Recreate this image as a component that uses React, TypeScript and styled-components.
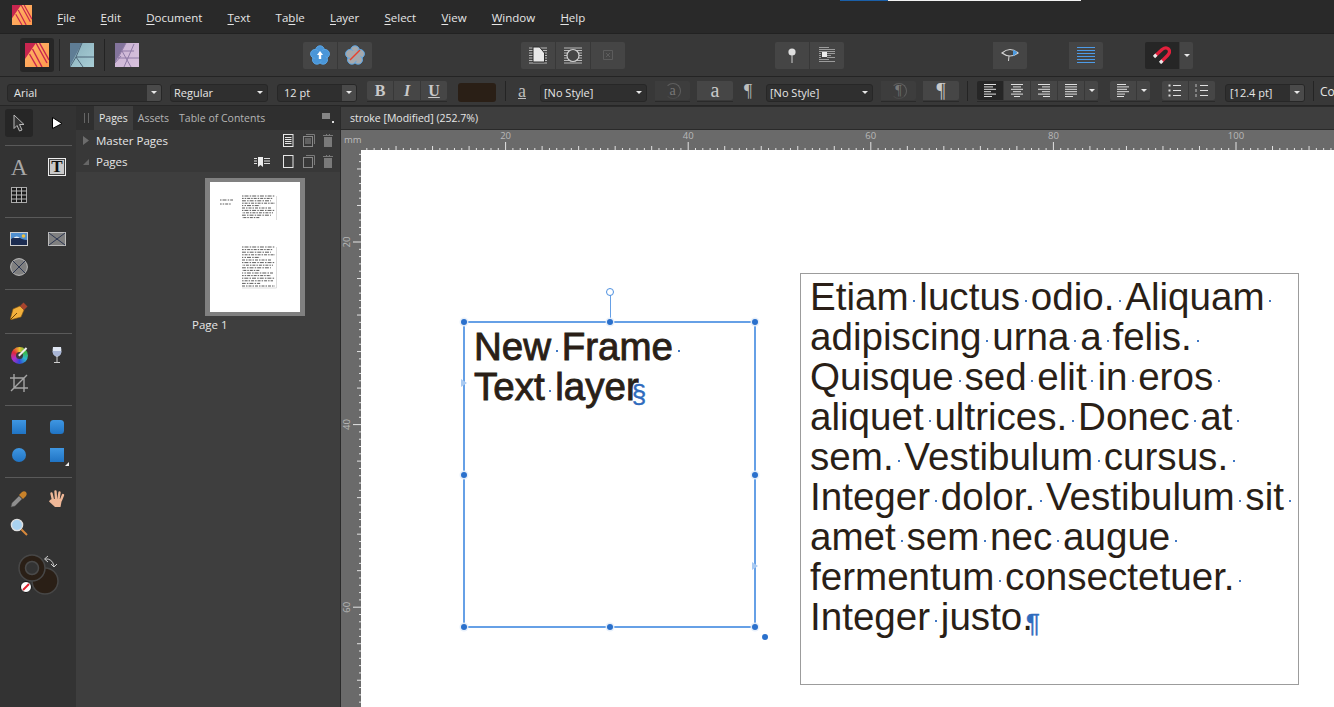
import React from 'react';
import styled, { createGlobalStyle } from 'styled-components';

const UI_FONT = '"Open Sans", "Noto Sans", sans-serif';

const GlobalStyle = createGlobalStyle`
  html, body {
    margin: 0;
    height: 100%;
    overflow: hidden;
    background: #3c3c3c;
  }
  * {
    box-sizing: border-box;
  }
  svg {
    display: block;
  }
`;

const Shell = styled.div`
  position: relative;
  display: flex;
  flex-direction: column;
  width: 1334px;
  height: 707px;
  overflow: hidden;
  font-family: ${UI_FONT};
  font-size: 11.5px;
  color: #e6e6e6;
`;

const TitleProgress = styled.div`
  position: absolute;
  top: 0;
  left: 840px;
  width: 241px;
  height: 1px;
  background: linear-gradient(to right, #1a5fa8 48px, #f2f2f2 48px);
`;

const MenuBar = styled.div`
  display: flex;
  align-items: center;
  gap: 25.2px;
  flex: 0 0 33px;
  padding: 1px 0 0 12px;
  background: #292929;
`;

const MenuLogo = styled.div`
  margin: -5px 0 0 0;
`;

const MenuItem = styled.span`
  u {
    text-underline-offset: 2px;
  }
`;

const Toolbar = styled.div`
  display: flex;
  align-items: center;
  flex: 0 0 44px;
  padding-left: 20px;
  background: #383838;
  border-top: 1px solid #222;
  border-bottom: 1px solid #242424;
`;

const PersonaButton = styled.div<{ $active?: boolean }>`
  display: flex;
  align-items: center;
  justify-content: center;
  width: 34px;
  height: 34px;
  border-radius: 3px;
  background: ${(p) => (p.$active ? '#262626' : 'transparent')};
`;

const PersonaDivider = styled.div`
  width: 1px;
  height: 32px;
  margin: 0 5px;
  background: #232323;
`;

const ButtonGroup = styled.div<{ $ml: number }>`
  display: flex;
  gap: 1px;
  flex-shrink: 0;
  margin-left: ${(p) => p.$ml}px;
`;

const BarButton = styled.div<{ $w?: number; $dark?: boolean }>`
  display: flex;
  align-items: center;
  justify-content: center;
  width: ${(p) => p.$w ?? 34}px;
  height: 27px;
  background: ${(p) => (p.$dark ? '#262626' : '#454545')};
  &:first-child {
    border-radius: 2px 0 0 2px;
  }
  &:last-child {
    border-radius: 0 2px 2px 0;
  }
`;

const ContextBar = styled.div`
  display: flex;
  align-items: center;
  flex: 0 0 29px;
  padding-left: 7px;
  background: #383838;
  border-bottom: 1px solid #262626;
  white-space: nowrap;
`;

const SelectBox = styled.div<{ $ml?: number; $w: number; $pad?: number }>`
  display: flex;
  align-items: center;
  flex-shrink: 0;
  width: ${(p) => p.$w}px;
  height: 18px;
  margin-top: 3px;
  margin-left: ${(p) => p.$ml ?? 0}px;
  padding-left: ${(p) => p.$pad ?? 6}px;
  background: #2f2f2f;
  border: 1px solid #272727;
  border-radius: 3px;
  font-size: 11px;
`;

const SelectLabel = styled.span`
  flex: 1;
`;

const SelectArrow = styled.div<{ $split?: boolean }>`
  display: flex;
  align-items: center;
  justify-content: center;
  align-self: stretch;
  width: 14px;
  background: ${(p) => (p.$split ? '#4a4a4a' : 'transparent')};
  border-radius: 0 2px 2px 0;
`;

const Caret = styled.span`
  width: 0;
  height: 0;
  border-left: 3.5px solid transparent;
  border-right: 3.5px solid transparent;
  border-top: 3.5px solid #e8e8e8;
`;

const SmallGroup = styled.div<{ $ml: number }>`
  display: flex;
  gap: 1px;
  flex-shrink: 0;
  margin-top: 1px;
  margin-left: ${(p) => p.$ml}px;
  padding-bottom: 1px;
  border-bottom: 1px solid #2a2a2a;
`;

const SmallButton = styled.div<{ $w: number; $dark?: boolean; $faded?: boolean; $large?: boolean }>`
  display: flex;
  align-items: center;
  justify-content: center;
  width: ${(p) => p.$w}px;
  height: 19px;
  background: ${(p) => (p.$dark ? '#262626' : p.$faded ? '#3d3d3d' : '#464646')};
  font-family: "Liberation Serif", serif;
  font-size: ${(p) => (p.$large ? 20 : 16)}px;
  color: ${(p) => (p.$faded ? '#777' : '#c9c9c9')};
  &:first-child {
    border-radius: 2px 0 0 2px;
  }
  &:last-child {
    border-radius: 0 2px 2px 0;
  }
`;

const Circled = styled.span`
  display: flex;
  align-items: center;
  justify-content: center;
  width: 16px;
  height: 16px;
  border: 1px solid #5f5f5f;
  border-left-color: transparent;
  border-bottom-color: #4a4a4a;
  border-radius: 50%;
  font-size: 14px;
  line-height: 1;
`;

const ColorSwatch = styled.div`
  flex-shrink: 0;
  width: 38px;
  height: 19px;
  margin-top: 2px;
  margin-left: 11px;
  background: #2a1f16;
  border-radius: 3px;
`;

const BarDivider = styled.div<{ $ml: number }>`
  flex-shrink: 0;
  width: 1px;
  height: 20px;
  margin-left: ${(p) => p.$ml}px;
  background: #242424;
`;

const StyleGlyph = styled.div<{ $ml: number }>`
  flex-shrink: 0;
  width: 16px;
  margin-left: ${(p) => p.$ml}px;
  font-family: "Liberation Serif", serif;
  font-size: 18px;
  line-height: 19px;
  text-align: center;
  color: #bdbdbd;
`;

const Clipped = styled.span`
  flex-shrink: 0;
  margin-left: 6px;
  font-size: 12px;
`;

const Main = styled.div`
  display: flex;
  flex: 1;
  min-height: 0;
`;

const ToolColumn = styled.div`
  flex: 0 0 76px;
  padding: 3px 4px 0 5px;
  background: #333;
`;

const ToolSection = styled.div`
  display: grid;
  grid-template-columns: 28px 28px;
  grid-auto-rows: 28px;
  column-gap: 10px;
  padding: 7px 0 8px;
  border-top: 1px solid #5a5a5a;
  &:first-child {
    padding-top: 0;
    border-top: 0;
  }
`;

const ToolCell = styled.div<{ $active?: boolean }>`
  display: flex;
  align-items: center;
  justify-content: center;
  border-radius: 3px;
  background: ${(p) => (p.$active ? '#262626' : 'transparent')};
`;

const FontTool = styled.span`
  font-family: "Liberation Serif", serif;
  font-size: 23px;
  line-height: 1;
  color: #a8a8a8;
`;

const FrameTool = styled.span`
  display: flex;
  align-items: center;
  justify-content: center;
  width: 18px;
  height: 18px;
  background: #c9c9c9;
  border: 1px solid #eee;
  outline: 1px solid #444;
  outline-offset: -2px;
  font-family: "Liberation Serif", serif;
  font-weight: 700;
  font-size: 17px;
  color: #111;
`;

const ColorWheel = styled.div`
  position: relative;
  width: 17px;
  height: 17px;
  border-radius: 50%;
  background: conic-gradient(#e8c030, #38b848, #30b8d0, #3048d8, #b030c8, #e02838, #e8c030);
  &::after {
    content: '';
    position: absolute;
    inset: 5px;
    border-radius: 50%;
    background: #3a3a3a;
  }
  &::before {
    content: '';
    position: absolute;
    z-index: 1;
    left: 6px;
    top: 4px;
    width: 11px;
    height: 1.5px;
    background: #eee;
    transform: rotate(-45deg);
  }
`;

const ColorPicker = styled.div`
  margin: 1px 0 0 8px;
`;

const Panel = styled.div`
  display: flex;
  flex-direction: column;
  flex: 0 0 264px;
  background: #3e3e3e;
`;

const PanelTabs = styled.div`
  display: flex;
  align-items: stretch;
  flex: 0 0 24px;
  padding-left: 18px;
  background: #2f2f2f;
  font-size: 10.5px;
`;

const PanelTab = styled.div<{ $active?: boolean }>`
  display: flex;
  align-items: center;
  padding: 0 5px;
  background: ${(p) => (p.$active ? '#3e3e3e' : 'transparent')};
  color: ${(p) => (p.$active ? '#e6e6e6' : '#b5b5b5')};
`;

const PanelMenu = styled.div`
  display: flex;
  align-items: center;
  margin-left: auto;
  padding-right: 6px;
`;

const PageRow = styled.div`
  display: flex;
  align-items: center;
  flex: 0 0 21px;
  padding-right: 7px;
  background: #383838;
`;

const RowArrow = styled.div`
  width: 20px;
  display: flex;
  justify-content: center;
`;

const RowLabel = styled.span`
  flex: 1;
`;

const RowIcons = styled.div`
  display: flex;
  align-items: center;
  gap: 8px;
`;

const SpreadSlot = styled.div`
  margin-right: 5px;
`;

const Thumbnails = styled.div`
  position: relative;
  flex: 1;
  padding: 6px 0 0 129px;
`;

const PageThumb = styled.div`
  width: 100px;
  height: 138px;
  padding: 4px 5px;
  background: #808080;
`;

const PageCaption = styled.div`
  margin: 1px 0 0 -13px;
`;

const Workspace = styled.div`
  display: flex;
  flex-direction: column;
  flex: 1;
  min-width: 0;
  background: #3a3a3a;
  border-left: 1px solid #2a2a2a;
`;

const DocTab = styled.div`
  display: flex;
  align-items: center;
  flex: 0 0 24px;
  padding-left: 9px;
  background: #3e3e3e;
  border-top: 1px solid #2a2a2a;
  border-bottom: 1px solid #2a2a2a;
  font-size: 10.5px;
`;

const RulerGrid = styled.div`
  display: grid;
  grid-template-columns: 20px 1fr;
  grid-template-rows: 20px 1fr;
  flex: 1;
  min-height: 0;
  background: #6a6a6a;
`;

const RulerCorner = styled.div`
  padding: 3px 0 0 3px;
  font-size: 9.5px;
  color: #bcbcbc;
`;

const Canvas = styled.div`
  position: relative;
  overflow: hidden;
  background: #fff;
  font-family: "Liberation Sans", Arial, sans-serif;
  color: #2a1f17;
`;

const TextFrame = styled.div`
  position: absolute;
  left: 439px;
  top: 123px;
  width: 499px;
  height: 412px;
  padding: 3px 0 0 9px;
  border: 1px solid #9c9c9c;
  font-size: 38.6px;
  line-height: 40px;
  white-space: nowrap;
`;

const HeadingFrame = styled.div`
  position: absolute;
  left: 113px;
  top: 177px;
  font-size: 38.5px;
  line-height: 40px;
  white-space: nowrap;
  -webkit-text-stroke: 0.9px #2a1f17;
`;

const Line = styled.div``;

const Blank = styled.span`
  position: relative;
  display: inline-block;
  white-space: pre;
  -webkit-text-stroke: 0;
  &::after {
    content: '';
    position: absolute;
    left: 45%;
    top: 23px;
    width: 2px;
    height: 2px;
    background: #3f78c4;
  }
`;

const Mark = styled.span<{ $size: number; $shift: number; $drop: number }>`
  display: inline-block;
  margin-left: ${(p) => p.$shift}px;
  font-size: ${(p) => p.$size}px;
  line-height: 1;
  color: #2f6bbd;
  vertical-align: ${(p) => -p.$drop}px;
  -webkit-text-stroke: 0.4px #2f6bbd;
`;

const Selection = styled.div`
  position: absolute;
  left: 103px;
  top: 172px;
  width: 291px;
  height: 305px;
  box-shadow: 0 0 0 1px #66a0e6, inset 0 0 0 1px #66a0e6;
`;

const Handle = styled.span<{ $x: number; $y: number }>`
  position: absolute;
  left: ${(p) => p.$x}%;
  top: ${(p) => p.$y}%;
  width: 6px;
  height: 6px;
  margin: -3px 0 0 -3px;
  border-radius: 50%;
  background: #2a70cc;
  box-shadow: 0 0 0 1.5px rgba(230, 238, 250, 0.9);
`;

const RotateStem = styled.span`
  position: absolute;
  left: 50%;
  top: -27px;
  width: 1px;
  height: 27px;
  background: #66a0e6;
`;

const RotateKnob = styled.span`
  position: absolute;
  left: 50%;
  top: -34px;
  width: 8px;
  height: 8px;
  margin-left: -4px;
  border: 1.5px solid #4d90e0;
  border-radius: 50%;
  background: #fff;
`;

const FlowPort = styled.span<{ $x: number; $y: number }>`
  position: absolute;
  left: ${(p) => p.$x}%;
  top: ${(p) => p.$y}%;
  margin: -4px 0 0 -3px;
  width: 0;
  height: 0;
  border-top: 4px solid transparent;
  border-bottom: 4px solid transparent;
  border-left: 6px solid #a9caf2;
`;

const OverflowDot = styled.span`
  position: absolute;
  right: -13px;
  bottom: -13px;
  width: 6px;
  height: 6px;
  border-radius: 50%;
  background: #2a70cc;
`;

const PublisherLogo = ({ size }: { size: number }) => (
  <svg width={size} height={size} viewBox="0 0 24 24">
    <defs>
      <linearGradient id={`pub${size}`} x1="0" y1="0" x2="1" y2="1">
        <stop offset="0" stopColor="#ffb56a" />
        <stop offset="1" stopColor="#ff9a4d" />
      </linearGradient>
    </defs>
    <rect width="24" height="24" fill={`url(#pub${size})`} />
    <path d="M0 0H11L0 16Z" fill="#c8264f" />
    <path d="M11 0L22 20M14.5 0L24 17M7.5 6L17 24M4.5 11L12 24" stroke="#c8264f" strokeWidth="1.4" fill="none" />
  </svg>
);

const DesignerLogo = () => (
  <svg width="24" height="24" viewBox="0 0 24 24">
    <defs>
      <linearGradient id="des" x1="0" y1="0" x2="1" y2="1">
        <stop offset="0" stopColor="#87aebb" />
        <stop offset="1" stopColor="#a9ced6" />
      </linearGradient>
    </defs>
    <rect width="24" height="24" fill="url(#des)" />
    <path d="M0 0H12L0 23Z" fill="#5f7d95" />
    <path d="M12 0L6 14H24M6 14L13 24M6 14L0 24" stroke="#4d6578" strokeWidth="1" fill="none" />
  </svg>
);

const PhotoLogo = () => (
  <svg width="24" height="24" viewBox="0 0 24 24">
    <defs>
      <linearGradient id="pho" x1="0" y1="0" x2="1" y2="1">
        <stop offset="0" stopColor="#c8b2d2" />
        <stop offset="1" stopColor="#d9c2de" />
      </linearGradient>
    </defs>
    <rect width="24" height="24" fill="url(#pho)" />
    <path d="M0 0H11L0 20Z" fill="#83749c" />
    <path d="M11 0L3 15H24M16 24L7 8H19M19 1L9 24M0 20L6 13" stroke="#8f7ba6" strokeWidth="1" fill="none" />
  </svg>
);

const Flower = ({ fill, children }: { fill: string; children: React.ReactNode }) => (
  <svg width="20" height="20" viewBox="0 0 20 20">
    {[0, 72, 144, 216, 288].map((a) => (
      <circle
        key={a}
        cx={10 + 5.3 * Math.sin((a * Math.PI) / 180)}
        cy={10.5 - 5.3 * Math.cos((a * Math.PI) / 180)}
        r="4.4"
        fill={fill}
        stroke="#5aa6e6"
        strokeWidth="1"
      />
    ))}
    <circle cx="10" cy="10.5" r="5.6" fill={fill} />
    {children}
  </svg>
);

const StripedBack = () => (
  <path
    d="M0 2H18M0 4.5H18M0 7H18M0 9.5H18M0 12H18M0 14.5H18M0 17H18"
    stroke="#b9b9b9"
    strokeWidth="1"
  />
);

const PageStripes = () => (
  <svg width="18" height="19" viewBox="0 0 18 19">
    <StripedBack />
    <path d="M4 1H10.5L15.5 7V16H4Z" fill="#e8e8e8" stroke="#2d2d2d" />
  </svg>
);

const CircleStripes = () => (
  <svg width="18" height="19" viewBox="0 0 18 19">
    <StripedBack />
    <circle cx="9" cy="9.5" r="6" fill="#454545" stroke="#cfcfcf" strokeWidth="1.2" />
  </svg>
);

const CrossBox = () => (
  <svg width="10" height="10" viewBox="0 0 10 10">
    <path d="M.5.5H9.5V9.5H.5ZM3 3L7 7M7 3L3 7" stroke="#5c5c5c" fill="none" />
  </svg>
);

const Pin = () => (
  <svg width="10" height="15" viewBox="0 0 10 15">
    <circle cx="5" cy="4" r="3.6" fill="#dedede" />
    <path d="M5 7V15" stroke="#cfcfcf" />
  </svg>
);

const WrapLines = () => (
  <svg width="17" height="16" viewBox="0 0 17 16">
    <path
      d="M0 .5H10M0 2.5H16M0 4.5H16M0 6.5H2M8 6.5H16M0 8.5H2M8 8.5H12M0 10.5H2M8 10.5H16M0 12.5H10M0 14.5H16"
      stroke="#9b9b9b"
    />
    <rect x="3" y="5" width="5" height="5" fill="#eee" />
  </svg>
);

const Preview = () => (
  <svg width="18" height="14" viewBox="0 0 18 14">
    <path d="M1 5Q9 -2 17 5Q9 11 1 5Z" fill="none" stroke="#d5d5d5" strokeWidth="1.2" />
    <path d="M12 2Q16 3 16 5Q14 7 12 8Z" fill="#4d9be0" />
    <path d="M8 8L7.5 13" stroke="#d5d5d5" />
  </svg>
);

const BlueLines = () => (
  <svg width="18" height="16" viewBox="0 0 18 16">
    <path d="M0 .5H18M0 3.5H18M0 6.5H18M0 9.5H18M0 12.5H18M0 15.5H18" stroke="#4d9be8" />
  </svg>
);

const Magnet = () => (
  <svg width="18" height="18" viewBox="0 0 18 18">
    <path d="M2 10L9 3.5Q13 .5 15.5 3Q18 6 14.5 9.5L8 16" fill="none" stroke="#e3203c" strokeWidth="3.2" />
    <path d="M1 11L3.4 8.7M7 17L9.4 14.7" stroke="#e8e8e8" strokeWidth="3.2" />
  </svg>
);

const AlignLines = ({ rows, x = [] }: { rows: number[]; x?: number[] }) => (
  <svg width="13" height="13" viewBox="0 0 13 13">
    {rows.map((w, i) => (
      <path key={i} d={`M${x[i] ?? 0} ${i * 2.4 + 0.5}h${w}`} stroke="#e0e0e0" />
    ))}
  </svg>
);

const ListLines = ({ numbered }: { numbered?: boolean }) => (
  <svg width="14" height="13" viewBox="0 0 14 13">
    {[1, 6, 11].map((y) => (
      <g key={y}>
        <path d={`M5 ${y + 0.5}H13`} stroke="#e0e0e0" />
        {numbered ? (
          <path d={`M1 ${y - 1}V${y + 2}`} stroke="#bbb" />
        ) : (
          <rect x="0.5" y={y - 0.5} width="2" height="2" fill="#dcdcdc" />
        )}
      </g>
    ))}
  </svg>
);

const Arrow = () => (
  <svg width="16" height="20" viewBox="0 0 16 20">
    <path d="M3 2L13 11.5H8.5L11 17L8.5 18L6 12.5L3 15.5Z" fill="#333" stroke="#b9b9b9" />
  </svg>
);

const NodeArrow = () => (
  <svg width="14" height="14" viewBox="0 0 14 14">
    <path d="M2.5 1.5L12 7.5L2.5 12.5Z" fill="#fff" stroke="#000" />
  </svg>
);

const TableTool = () => (
  <svg width="16" height="16" viewBox="0 0 16 16">
    <rect x=".5" y=".5" width="15" height="15" fill="#1c1c1c" stroke="#aaa" />
    <path d="M0 4H16M0 8H16M0 12H16M5.5 0V16M10.5 0V16" stroke="#b8b8b8" />
  </svg>
);

const PictureTool = () => (
  <svg width="18" height="14" viewBox="0 0 18 14">
    <rect width="18" height="14" fill="#cfcfcf" />
    <rect x="1" y="1" width="16" height="12" fill="#4f8fd0" />
    <circle cx="13.5" cy="4" r="1.8" fill="#f0c040" />
    <path d="M1 7Q6 3 12 7Q15 8 17 8V13H1Z" fill="#1c2c50" />
    <path d="M3 6Q7 3 10 6Z" fill="#e8f0f8" />
  </svg>
);

const CrossRect = () => (
  <svg width="18" height="14" viewBox="0 0 18 14">
    <rect x=".5" y=".5" width="17" height="13" fill="#808080" stroke="#bbb" />
    <path d="M1 1L17 13M17 1L1 13" stroke="#2b3550" />
  </svg>
);

const CrossEllipse = () => (
  <svg width="18" height="18" viewBox="0 0 18 18">
    <circle cx="9" cy="9" r="8.4" fill="#808080" stroke="#bbb" />
    <path d="M3 3L15 15M15 3L3 15" stroke="#2b3550" />
  </svg>
);

const PenNib = () => (
  <svg width="18" height="18" viewBox="0 0 18 18">
    <path d="M0 18L3 7L10 4L14 8L11 15Z" fill="#f2b03c" stroke="#8a5a10" strokeWidth=".6" />
    <path d="M0 18L7 11" stroke="#6a4208" />
    <path d="M10 4L13.5 .5L17.5 4.5L14 8Z" fill="#a8452e" />
  </svg>
);

const Glass = () => (
  <svg width="12" height="18" viewBox="0 0 12 18">
    <path d="M2 1H10Q11.5 8 7 10.5H5Q.5 8 2 1Z" fill="#dfe6f2" />
    <path d="M1.5 5H10.5Q10.5 9 7 10.5H5Q1.5 9 1.5 5Z" fill="#a9b6d6" />
    <path d="M6 10V16M3 16.5H9" stroke="#cfcfcf" />
  </svg>
);

const CropTool = () => (
  <svg width="18" height="18" viewBox="0 0 18 18">
    <path d="M4 0V14H18M0 4H14V18M1 17L17 1" stroke="#a4a4a4" strokeWidth="1.4" fill="none" />
  </svg>
);

const Shape = ({ kind }: { kind: 'rect' | 'round' | 'circle' | 'more' }) => (
  <svg width="18" height="18" viewBox="0 0 18 18" style={{ overflow: 'visible' }}>
    <defs>
      <linearGradient id={`shape${kind}`} x1="0" y1="0" x2="0" y2="1">
        <stop offset="0" stopColor="#3f97e2" />
        <stop offset="1" stopColor="#2074c4" />
      </linearGradient>
    </defs>
    {kind === 'circle' ? (
      <circle cx="9" cy="9" r="7" fill={`url(#shape${kind})`} />
    ) : (
      <rect x="2" y="2" width="14" height="14" rx={kind === 'round' ? 3.5 : 0} fill={`url(#shape${kind})`} />
    )}
    {kind === 'more' && <path d="M21 20V16L17 20Z" fill="#eee" />}
  </svg>
);

const Dropper = () => (
  <svg width="18" height="18" viewBox="0 0 18 18">
    <path d="M1 17L2 13L9 6L12 9L5 16Z" fill="#8f8f8f" stroke="#555" strokeWidth=".5" />
    <path d="M9 5L12 2Q14 0.5 16 2Q17.5 4 16 6L13 9Z" fill="#c8822a" />
  </svg>
);

const Hand = () => (
  <svg width="18" height="18" viewBox="0 0 18 18">
    <path d="M5 10L3.5 3.5M8 9L7.5 1.5M10.5 9L11.5 2.5M13 10L15 5" stroke="#f0b898" strokeWidth="2.4" strokeLinecap="round" />
    <path d="M4 9H14L12.5 17H7L1 11.5L2 10Z" fill="#f0b898" />
  </svg>
);

const Magnifier = () => (
  <svg width="18" height="18" viewBox="0 0 18 18">
    <circle cx="7" cy="7" r="5.6" fill="#a9d2f0" stroke="#e0e0e0" strokeWidth="1.4" />
    <path d="M11.5 11.5L17 17" stroke="#d8893c" strokeWidth="2" />
  </svg>
);

const Swatches = () => (
  <svg width="50" height="52" viewBox="0 0 50 52">
    <circle cx="32" cy="31" r="13" fill="#2a1f16" stroke="#474747" strokeWidth="1.5" />
    <circle cx="19" cy="18" r="13" fill="#2a1f16" stroke="#474747" strokeWidth="1.5" />
    <circle cx="19" cy="18" r="6.5" fill="#333" stroke="#4a4a4a" strokeWidth="1.5" />
    <path d="M32 9Q39 8 41 16M35 6L31.5 9L35 12M38 14L41 17L44 14" stroke="#ccc" fill="none" />
    <circle cx="13" cy="37" r="5.5" fill="#fff" stroke="#111" />
    <path d="M10 40L16 34" stroke="#e2202c" strokeWidth="2" />
  </svg>
);

const Tri = ({ open }: { open?: boolean }) => (
  <svg width="8" height="9" viewBox="0 0 8 9">
    {open ? <path d="M7 2V8H1Z" fill="#666" /> : <path d="M1 0V9L7 4.5Z" fill="#6c6c6c" />}
  </svg>
);

const PageAdd = ({ lines }: { lines?: boolean }) => (
  <svg width="12" height="13" viewBox="0 0 12 13">
    <rect x=".5" y=".5" width="9.5" height="12" fill="none" stroke="#e6e6e6" />
    {lines && <path d="M2 3.5H8.5M2 5.5H8.5M2 7.5H8.5M2 9.5H8.5" stroke="#e6e6e6" />}
  </svg>
);

const PageCopy = ({ lines }: { lines?: boolean }) => (
  <svg width="12" height="13" viewBox="0 0 12 13">
    <path d="M3 .5H11.5V10" fill="none" stroke="#7a7a7a" />
    <rect x=".5" y="2.5" width="9" height="10" fill="none" stroke="#8a8a8a" />
    {lines && <path d="M2 5H8M2 7H8M2 9H8" stroke="#8a8a8a" />}
  </svg>
);

const Trash = () => (
  <svg width="10" height="13" viewBox="0 0 10 13">
    <path d="M0 1.5H10M3.5 1V0H6.5V1" stroke="#7a7a7a" />
    <path d="M1 3H9V13H1Z" fill="#7a7a7a" />
  </svg>
);

const Spread = () => (
  <svg width="16" height="10" viewBox="0 0 16 10">
    <path d="M0 1.5H3M0 4H3M0 6.5H3M10 1.5H16M10 4H16M10 6.5H16" stroke="#ddd" />
    <path d="M4 0H9V10L6.5 8L4 10Z" fill="#eee" />
  </svg>
);

const PanelMenuIcon = () => (
  <svg width="12" height="10" viewBox="0 0 12 10">
    <path d="M0 1H8M0 3H8M0 5H8" stroke="#ddd" />
    <rect x="10" y="8" width="2" height="2" fill="#ddd" />
  </svg>
);

const Grip = styled.div`
  position: absolute;
  margin: 7px 0 0 -10px;
  width: 5px;
  height: 10px;
  border-left: 1px solid #666;
  border-right: 1px solid #666;
`;

const TinyPage = () => {
  const block = (x: number, y: number, w: number, rows: number, pitch: number) =>
    Array.from({ length: rows }, (_, i) => (
      <path
        key={`${x}-${y}-${i}`}
        d={`M${x} ${y + i * pitch}h${i % 5 === 4 ? w * 0.55 : w - (i % 3) * 2}`}
        stroke="#333"
        strokeWidth=".8"
        strokeDasharray={i % 2 ? '3 1 1.5 1' : '1.5 1 4 1.2'}
        strokeDashoffset={i * 1.3}
      />
    ));
  return (
    <svg width="90" height="130" viewBox="0 0 90 130">
      <rect width="90" height="130" fill="#fff" />
      {block(10, 18, 13, 2, 4)}
      {block(32, 14, 33, 10, 2.4)}
      {block(32, 65, 33, 16, 2.6)}
      <path d="M66.5 14V38M66.5 65V106H32" stroke="#ddd" fill="none" />
    </svg>
  );
};

const MM = 9.13;
const MINOR = MM * 0.8;

const TopRuler = () => {
  const zero = -38;
  return (
    <svg width="973" height="20" viewBox="0 0 973 20">
      {Array.from({ length: 140 }, (_, k) => {
        const x = zero + k * MINOR;
        const h = k % 25 === 0 ? 8 : k % 5 === 0 ? 4 : 2;
        return <path key={k} d={`M${x} 20v-${h}`} stroke="#e4e4e4" />;
      })}
      {[20, 40, 60, 80, 100].map((v) => (
        <text key={v} x={zero + v * MM} y="9" fontSize="9.5" fill="#b8b8b8" textAnchor="middle" fontFamily={UI_FONT}>
          {v}
        </text>
      ))}
    </svg>
  );
};

const LeftRuler = () => {
  const zero = -90.6;
  return (
    <svg width="20" height="557" viewBox="0 0 20 557">
      {Array.from({ length: 90 }, (_, k) => {
        const y = zero + k * MINOR;
        const h = k % 25 === 0 ? 8 : k % 5 === 0 ? 4 : 2;
        return <path key={k} d={`M20 ${y}h-${h}`} stroke="#e4e4e4" />;
      })}
      {[20, 40, 60].map((v) => (
        <text
          key={v}
          transform={`translate(9 ${zero + v * MM}) rotate(-90)`}
          fontSize="9.5"
          fill="#b8b8b8"
          textAnchor="middle"
          fontFamily={UI_FONT}
        >
          {v}
        </text>
      ))}
    </svg>
  );
};

const menu: [string, string][] = [
  ['F', 'ile'],
  ['E', 'dit'],
  ['D', 'ocument'],
  ['T', 'ext'],
  ['Ta', 'ble'],
  ['L', 'ayer'],
  ['S', 'elect'],
  ['V', 'iew'],
  ['W', 'indow'],
  ['H', 'elp'],
];

const bodyLines = [
  'Etiam luctus odio. Aliquam',
  'adipiscing urna a felis.',
  'Quisque sed elit in eros',
  'aliquet ultrices. Donec at',
  'sem. Vestibulum cursus.',
  'Integer dolor. Vestibulum sit',
  'amet sem nec augue',
  'fermentum consectetuer.',
  'Integer justo.',
];

const Spaced = ({ text, trailing = true }: { text: string; trailing?: boolean }) => {
  const words = text.split(' ');
  return (
    <>
      {words.map((w, i) => (
        <React.Fragment key={i}>
          {w}
          {(i < words.length - 1 || trailing) && <Blank> </Blank>}
        </React.Fragment>
      ))}
    </>
  );
};

const handles = [
  [0, 0],
  [50, 0],
  [100, 0],
  [0, 50],
  [100, 50],
  [0, 100],
  [50, 100],
  [100, 100],
];

const App: React.FC = () => (
  <Shell>
    <GlobalStyle />
    <TitleProgress />
    <MenuBar>
      <MenuLogo>
        <PublisherLogo size={20} />
      </MenuLogo>
      {menu.map(([key, rest]) =>
        key === 'Ta' ? (
          <MenuItem key={key}>
            Ta<u>b</u>le
          </MenuItem>
        ) : (
          <MenuItem key={key}>
            <u>{key}</u>
            {rest}
          </MenuItem>
        ),
      )}
    </MenuBar>

    <Toolbar>
      <PersonaButton $active>
        <PublisherLogo size={24} />
      </PersonaButton>
      <PersonaDivider />
      <PersonaButton>
        <DesignerLogo />
      </PersonaButton>
      <PersonaDivider />
      <PersonaButton>
        <PhotoLogo />
      </PersonaButton>

      <ButtonGroup $ml={159}>
        <BarButton>
          <Flower fill="#4a96d8">
            <path d="M10 6L13 10H11.2V14H8.8V10H7Z" fill="#fff" />
          </Flower>
        </BarButton>
        <BarButton>
          <Flower fill="#a6a9ad">
            <path d="M5 15L15 5" stroke="#e8402c" strokeWidth="1.4" />
          </Flower>
        </BarButton>
      </ButtonGroup>

      <ButtonGroup $ml={149}>
        <BarButton>
          <PageStripes />
        </BarButton>
        <BarButton>
          <CircleStripes />
        </BarButton>
        <BarButton>
          <CrossBox />
        </BarButton>
      </ButtonGroup>

      <ButtonGroup $ml={150}>
        <BarButton>
          <Pin />
        </BarButton>
        <BarButton>
          <WrapLines />
        </BarButton>
      </ButtonGroup>

      <ButtonGroup $ml={149}>
        <BarButton>
          <Preview />
        </BarButton>
      </ButtonGroup>

      <ButtonGroup $ml={42}>
        <BarButton>
          <BlueLines />
        </BarButton>
      </ButtonGroup>

      <ButtonGroup $ml={42}>
        <BarButton $w={34} $dark>
          <Magnet />
        </BarButton>
        <BarButton $w={13}>
          <Caret />
        </BarButton>
      </ButtonGroup>
    </Toolbar>

    <ContextBar>
      <SelectBox $w={155}>
        <SelectLabel>Arial</SelectLabel>
        <SelectArrow $split>
          <Caret />
        </SelectArrow>
      </SelectBox>
      <SelectBox $w={98} $ml={8} $pad={3}>
        <SelectLabel>Regular</SelectLabel>
        <SelectArrow>
          <Caret />
        </SelectArrow>
      </SelectBox>
      <SelectBox $w={80} $ml={9}>
        <SelectLabel>12 pt</SelectLabel>
        <SelectArrow $split>
          <Caret />
        </SelectArrow>
      </SelectBox>
      <SmallGroup $ml={10}>
        <SmallButton $w={26}>
          <b>B</b>
        </SmallButton>
        <SmallButton $w={26}>
          <i>
            <b>I</b>
          </i>
        </SmallButton>
        <SmallButton $w={26}>
          <u>
            <b>U</b>
          </u>
        </SmallButton>
      </SmallGroup>
      <ColorSwatch />
      <BarDivider $ml={9} />
      <StyleGlyph $ml={8}>
        <u>a</u>
      </StyleGlyph>
      <SelectBox $w={107} $ml={10} $pad={3}>
        <SelectLabel>[No Style]</SelectLabel>
        <SelectArrow>
          <Caret />
        </SelectArrow>
      </SelectBox>
      <SmallGroup $ml={8}>
        <SmallButton $w={35} $faded>
          <Circled>a</Circled>
        </SmallButton>
      </SmallGroup>
      <SmallGroup $ml={7}>
        <SmallButton $w={36} $large>
          a
        </SmallButton>
      </SmallGroup>
      <StyleGlyph $ml={7}>¶</StyleGlyph>
      <SelectBox $w={107} $ml={10} $pad={3}>
        <SelectLabel>[No Style]</SelectLabel>
        <SelectArrow>
          <Caret />
        </SelectArrow>
      </SelectBox>
      <SmallGroup $ml={8}>
        <SmallButton $w={35} $faded>
          <Circled>¶</Circled>
        </SmallButton>
      </SmallGroup>
      <SmallGroup $ml={7}>
        <SmallButton $w={36} $large>
          ¶
        </SmallButton>
      </SmallGroup>
      <BarDivider $ml={8} />
      <SmallGroup $ml={9}>
        <SmallButton $w={26} $dark>
          <AlignLines rows={[12, 9, 12, 7, 12, 8]} />
        </SmallButton>
        <SmallButton $w={26}>
          <AlignLines rows={[12, 8, 12, 8, 12, 6]} x={[0, 2, 0, 2, 0, 3]} />
        </SmallButton>
        <SmallButton $w={26}>
          <AlignLines rows={[12, 8, 12, 8, 12, 7]} x={[0, 4, 0, 4, 0, 5]} />
        </SmallButton>
        <SmallButton $w={26}>
          <AlignLines rows={[12, 12, 12, 12, 12, 8]} />
        </SmallButton>
        <SmallButton $w={13}>
          <Caret />
        </SmallButton>
      </SmallGroup>
      <SmallGroup $ml={12}>
        <SmallButton $w={26}>
          <AlignLines rows={[9, 12, 10, 12, 8, 7]} />
        </SmallButton>
        <SmallButton $w={13}>
          <Caret />
        </SmallButton>
      </SmallGroup>
      <SmallGroup $ml={12}>
        <SmallButton $w={26}>
          <ListLines />
        </SmallButton>
        <SmallButton $w={26}>
          <ListLines numbered />
        </SmallButton>
      </SmallGroup>
      <SelectBox $w={80} $ml={10} $pad={4}>
        <SelectLabel>[12.4 pt]</SelectLabel>
        <SelectArrow $split>
          <Caret />
        </SelectArrow>
      </SelectBox>
      <BarDivider $ml={8} />
      <Clipped>Co</Clipped>
    </ContextBar>

    <Main>
      <ToolColumn>
        <ToolSection>
          <ToolCell $active>
            <Arrow />
          </ToolCell>
          <ToolCell>
            <NodeArrow />
          </ToolCell>
        </ToolSection>
        <ToolSection>
          <ToolCell>
            <FontTool>A</FontTool>
          </ToolCell>
          <ToolCell>
            <FrameTool>T</FrameTool>
          </ToolCell>
          <ToolCell>
            <TableTool />
          </ToolCell>
        </ToolSection>
        <ToolSection>
          <ToolCell>
            <PictureTool />
          </ToolCell>
          <ToolCell>
            <CrossRect />
          </ToolCell>
          <ToolCell>
            <CrossEllipse />
          </ToolCell>
        </ToolSection>
        <ToolSection>
          <ToolCell>
            <PenNib />
          </ToolCell>
        </ToolSection>
        <ToolSection>
          <ToolCell>
            <ColorWheel />
          </ToolCell>
          <ToolCell>
            <Glass />
          </ToolCell>
          <ToolCell>
            <CropTool />
          </ToolCell>
        </ToolSection>
        <ToolSection>
          <ToolCell>
            <Shape kind="rect" />
          </ToolCell>
          <ToolCell>
            <Shape kind="round" />
          </ToolCell>
          <ToolCell>
            <Shape kind="circle" />
          </ToolCell>
          <ToolCell>
            <Shape kind="more" />
          </ToolCell>
        </ToolSection>
        <ToolSection>
          <ToolCell>
            <Dropper />
          </ToolCell>
          <ToolCell>
            <Hand />
          </ToolCell>
          <ToolCell>
            <Magnifier />
          </ToolCell>
        </ToolSection>
        <ColorPicker>
          <Swatches />
        </ColorPicker>
      </ToolColumn>

      <Panel>
        <PanelTabs>
          <Grip />
          <PanelTab $active>Pages</PanelTab>
          <PanelTab>Assets</PanelTab>
          <PanelTab>Table of Contents</PanelTab>
          <PanelMenu>
            <PanelMenuIcon />
          </PanelMenu>
        </PanelTabs>
        <PageRow>
          <RowArrow>
            <Tri />
          </RowArrow>
          <RowLabel>Master Pages</RowLabel>
          <RowIcons>
            <PageAdd lines />
            <PageCopy lines />
            <Trash />
          </RowIcons>
        </PageRow>
        <PageRow>
          <RowArrow>
            <Tri open />
          </RowArrow>
          <RowLabel>Pages</RowLabel>
          <RowIcons>
            <SpreadSlot>
              <Spread />
            </SpreadSlot>
            <PageAdd />
            <PageCopy />
            <Trash />
          </RowIcons>
        </PageRow>
        <Thumbnails>
          <PageThumb>
            <TinyPage />
          </PageThumb>
          <PageCaption>Page 1</PageCaption>
        </Thumbnails>
      </Panel>

      <Workspace>
        <DocTab>stroke [Modified] (252.7%)</DocTab>
        <RulerGrid>
          <RulerCorner>mm</RulerCorner>
          <TopRuler />
          <LeftRuler />
          <Canvas>
            <HeadingFrame>
              <Line>
                <Spaced text="New Frame" />
              </Line>
              <Line>
                <Spaced text="Text layer" trailing={false} />
                <Mark $size={26} $shift={-7} $drop={3}>§</Mark>
              </Line>
            </HeadingFrame>
            <Selection>
              <RotateStem />
              <RotateKnob />
              {handles.map(([x, y]) => (
                <Handle key={`${x}-${y}`} $x={x} $y={y} />
              ))}
              <FlowPort $x={0} $y={20} />
              <FlowPort $x={100} $y={80} />
              <OverflowDot />
            </Selection>
            <TextFrame>
              {bodyLines.map((l, i) => (
                <Line key={l}>
                  <Spaced text={l} trailing={i < bodyLines.length - 1} />
                  {i === bodyLines.length - 1 && <Mark $size={26} $shift={-7} $drop={2}>¶</Mark>}
                </Line>
              ))}
            </TextFrame>
          </Canvas>
        </RulerGrid>
      </Workspace>
    </Main>
  </Shell>
);

export default App;
